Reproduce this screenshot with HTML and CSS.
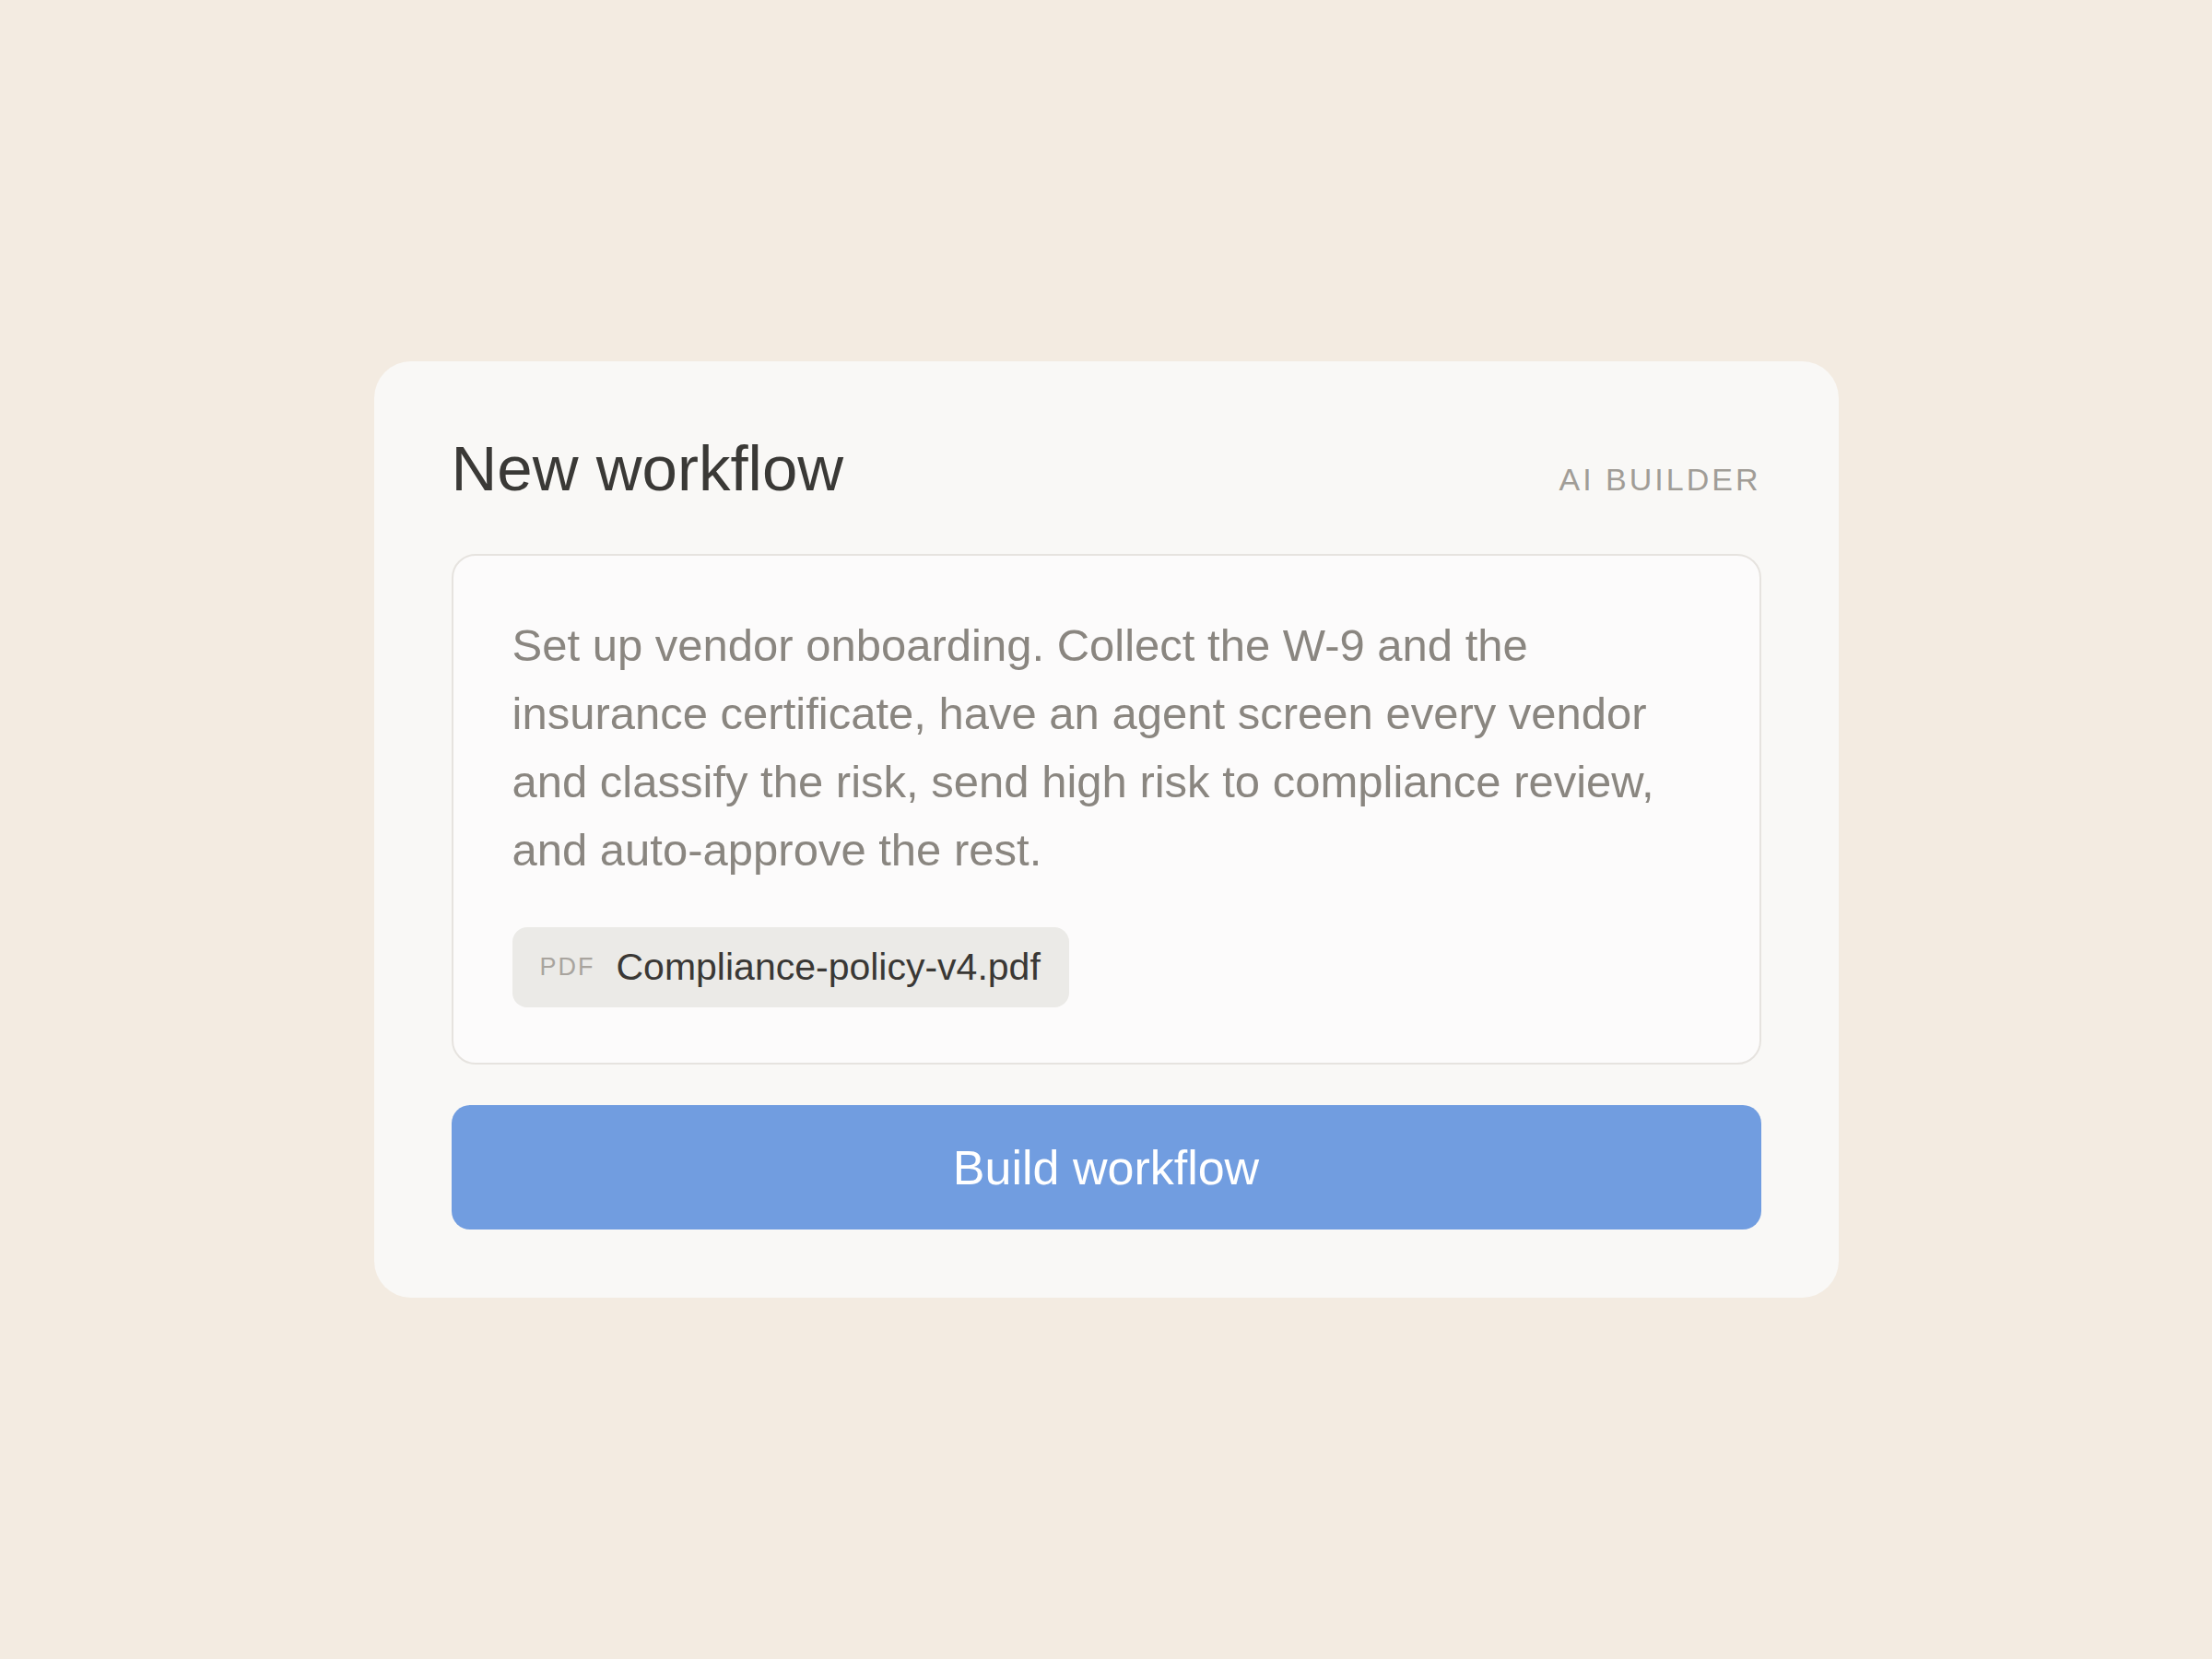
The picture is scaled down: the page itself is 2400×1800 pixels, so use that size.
FILE: index.html
```html
<!DOCTYPE html>
<html lang="en">
<head>
    <meta charset="UTF-8">
    <meta name="viewport" content="width=device-width, initial-scale=1.0">
    <title>New workflow</title>
    <link rel="stylesheet" href="styles.css">
</head>
<body>
    <div class="builder-card">
        <div class="builder-head">
            <h1>New workflow</h1>
            <span class="builder-tag">AI BUILDER</span>
        </div>

        <div class="prompt-box">
            <p class="prompt-text">Set up vendor onboarding. Collect the W-9 and the insurance certificate, have an agent screen every vendor and classify the risk, send high risk to compliance review, and auto-approve the rest.</p>
            <div class="attachment">
                <span class="attachment-type">PDF</span>
                <span class="attachment-name">Compliance-policy-v4.pdf</span>
            </div>
        </div>

        <button class="build-btn">Build workflow</button>
    </div>
</body>
</html>
```

FILE: styles.css
```css
body {
    font-family: "Liberation Sans", Arial, sans-serif;
    margin: 0;
    padding: 0;
    min-height: 100vh;
    background: #f3ebe1;
    display: flex;
    align-items: center;
    justify-content: center;
}

.builder-card {
    width: 1589px;
    box-sizing: border-box;
    padding: 76px 84px 74px;
    background: #f9f8f6;
    border-radius: 40px;
}

.builder-head {
    display: flex;
    justify-content: space-between;
    align-items: baseline;
    margin-bottom: 51px;
}
.builder-head h1 {
    margin: 0;
    font-size: 69px;
    font-weight: 400;
    line-height: 1.2;
    color: #3a3936;
}
.builder-tag {
    font-size: 34px;
    letter-spacing: 3px;
    color: #a19d97;
}

.prompt-box {
    padding: 60px 64px;
    background: #fcfbfb;
    border: 2px solid #e6e3df;
    border-radius: 26px;
}
.prompt-text {
    margin: 0;
    font-size: 49px;
    line-height: 74px;
    color: #8a8680;
}

.attachment {
    display: inline-flex;
    align-items: center;
    gap: 23px;
    height: 87px;
    margin-top: 47px;
    padding: 0 31px 0 30px;
    background: #ebeae7;
    border-radius: 16px;
}
.attachment-type {
    font-size: 27px;
    letter-spacing: 2px;
    color: #a8a49e;
}
.attachment-name {
    font-size: 41px;
    color: #3a3835;
}

.build-btn {
    display: block;
    width: 100%;
    height: 135px;
    margin-top: 44px;
    border: none;
    border-radius: 20px;
    background: #719de0;
    color: #fff;
    font-family: inherit;
    font-size: 52px;
    cursor: pointer;
}
```
